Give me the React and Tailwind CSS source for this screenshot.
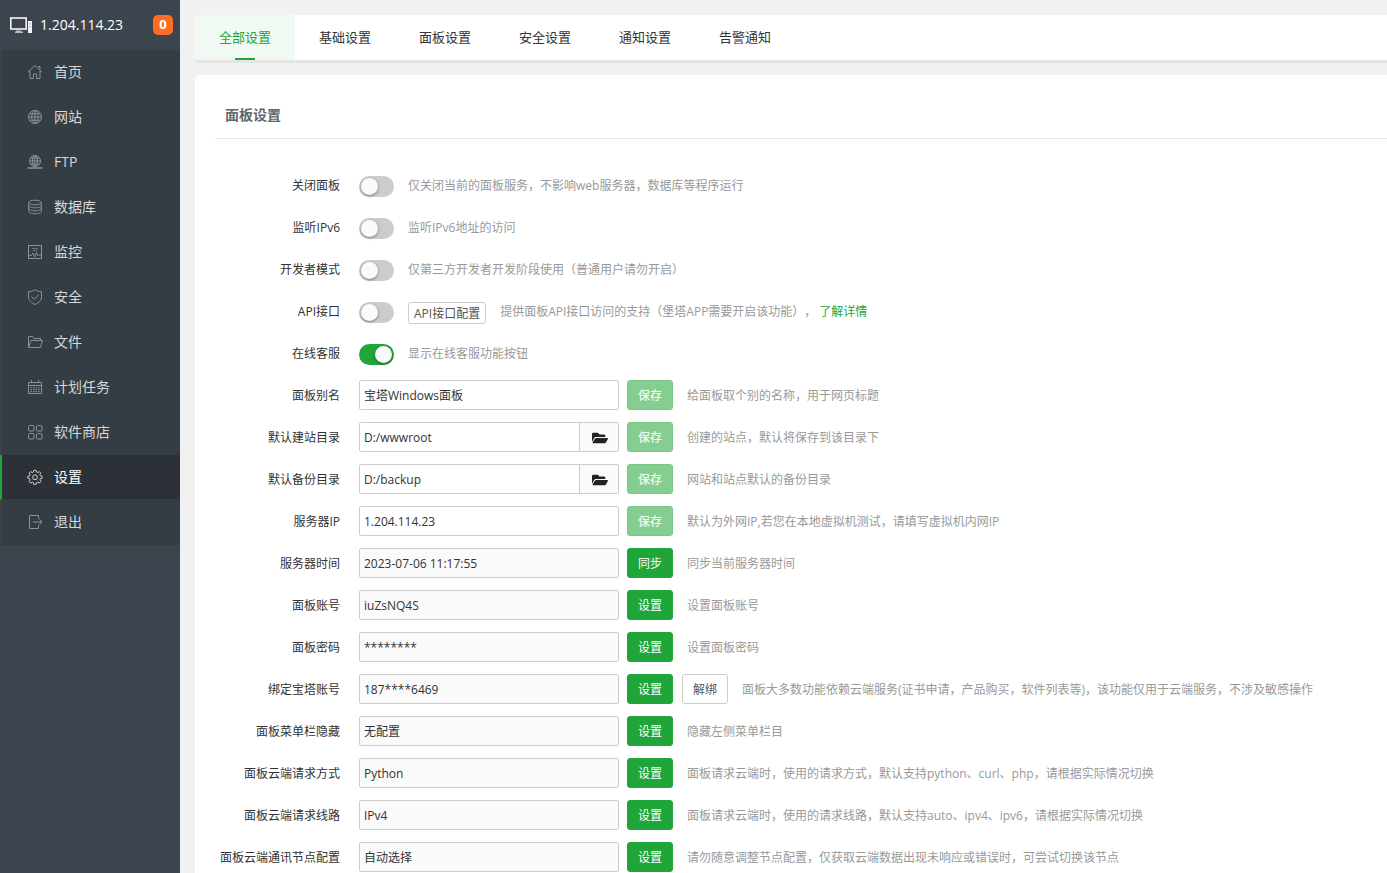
import React, { useState } from "react";
import { FaFolderOpen } from "react-icons/fa";

const icons = {
  home: (
    <>
      <path d="M1 8.2 8 1.5l7 6.7" />
      <path d="M3 7v7.5h3.4V10h3.2v4.5H13V7" />
      <path d="M11 2.5h2v3" />
    </>
  ),
  site: (
    <>
      <circle cx="8" cy="8" r="6.5" />
      <ellipse cx="8" cy="8" rx="3.2" ry="6.5" />
      <path d="M8 1.5v13M1.5 8h13M2.6 4.8h10.8M2.6 11.2h10.8" />
    </>
  ),
  ftp: (
    <>
      <circle cx="8" cy="7" r="5.5" />
      <ellipse cx="8" cy="7" rx="2.6" ry="5.5" />
      <path d="M8 1.5v11M2.5 7h11M3.5 4h9M3.5 10h9" />
      <path d="M0.5 14h15M6 14h4" strokeWidth="1.4" />
    </>
  ),
  database: (
    <>
      <ellipse cx="8" cy="3.5" rx="6.3" ry="2.3" />
      <path d="M1.7 3.5v9c0 1.3 2.8 2.3 6.3 2.3s6.3-1 6.3-2.3v-9" />
      <path d="M1.7 6.5c0 1.3 2.8 2.3 6.3 2.3s6.3-1 6.3-2.3M1.7 9.5c0 1.3 2.8 2.3 6.3 2.3s6.3-1 6.3-2.3" />
    </>
  ),
  control: (
    <>
      <rect x="1.5" y="1.5" width="13" height="13" />
      <path d="M5 4.5h6M6 6.5h4" opacity="0.7" />
      <path d="M1.5 11.5h2.7L6 9l1.7 4L9.5 8.5l1.3 3h1.4l.8-1 1.5 1" />
    </>
  ),
  safe: (
    <>
      <path d="M8 .8c2 1.3 4.2 1.8 6.5 1.9v5.1c0 3.5-2.7 6-6.5 7.7C4.2 13.8 1.5 11.3 1.5 7.8V2.7C3.8 2.6 6 2.1 8 .8Z" />
      <path d="m4.5 7.6 2.7 2.7 4.5-4.8" />
    </>
  ),
  folder: (
    <>
      <path d="M1.5 13.5v-11h4.2L7 4.5h6.5v2" />
      <path d="M1.5 13.5 4 6.500h11.500l-2.200 7Z" />
    </>
  ),
  cron: (
    <>
      <path d="M1.5 3.5h13v11h-13zM1.5 6.5h13M4.5 1v3M11.5 1v3" />
      <path d="M3.5 8.8h9M3.5 10.7h9M3.5 12.6h9" strokeDasharray="1.5 1" />
    </>
  ),
  soft: (
    <>
      <rect x="1.5" y="1.5" width="5.5" height="5.5" rx="1" />
      <rect x="9.5" y="1.5" width="5.5" height="5.5" rx="1" />
      <rect x="1.5" y="9.5" width="5.5" height="5.5" rx="1" />
      <rect x="9.5" y="9.5" width="5.5" height="5.5" rx="1" />
    </>
  ),
  config: (
    <>
      <path d="M6.8 1.300h2.400l.4 1.800 1.100.5 1.600-1 1.600 1.600-1 1.600.5 1.100 1.700.4v2l-1.700.4-.5 1.200 1 1.500-1.600 1.700-1.600-1-1.100.5-.4 1.700H6.800l-.4-1.700-1.100-.5-1.600 1-1.600-1.700 1-1.500-.5-1.200L.9 9.300v-2l1.700-.4.5-1.100-1-1.600 1.600-1.600 1.600 1 1.100-.5Z" />
      <circle cx="8" cy="8.3" r="2.4" />
    </>
  ),
  exit: (
    <>
      <path d="M11.5 4.5v-3h-9v13h9v-3" />
      <path d="M6 8h9M12.3 5.3 15 8l-2.7 2.7" />
    </>
  ),
};

const menus = [
  { icon: "home", title: "首页" },
  { icon: "site", title: "网站" },
  { icon: "ftp", title: "FTP" },
  { icon: "database", title: "数据库" },
  { icon: "control", title: "监控" },
  { icon: "safe", title: "安全" },
  { icon: "folder", title: "文件" },
  { icon: "cron", title: "计划任务" },
  { icon: "soft", title: "软件商店" },
  { icon: "config", title: "设置" },
  { icon: "exit", title: "退出" },
];

const tabs = ["全部设置", "基础设置", "面板设置", "安全设置", "通知设置", "告警通知"];

const switches = [
  { id: "close_panel", label: "关闭面板", tips: "仅关闭当前的面板服务，不影响web服务器，数据库等程序运行" },
  { id: "ipv6", label: "监听IPv6", tips: "监听IPv6地址的访问" },
  { id: "debug", label: "开发者模式", tips: "仅第三方开发者开发阶段使用（普通用户请勿开启）" },
  {
    id: "api",
    label: "API接口",
    config: "API接口配置",
    tips: "提供面板API接口访问的支持（堡塔APP需要开启该功能），",
    link: "了解详情",
  },
  { id: "service", label: "在线客服", on: true, tips: "显示在线客服功能按钮" },
];

const fields = [
  { id: "alias", label: "面板别名", value: "宝塔Windows面板", btn: "保存", tips: "给面板取个别的名称，用于网页标题" },
  { id: "sites_path", label: "默认建站目录", value: "D:/wwwroot", folder: true, btn: "保存", tips: "创建的站点，默认将保存到该目录下" },
  { id: "backup_path", label: "默认备份目录", value: "D:/backup", folder: true, btn: "保存", tips: "网站和站点默认的备份目录" },
  { id: "server_ip", label: "服务器IP", value: "1.204.114.23", btn: "保存", tips: "默认为外网IP,若您在本地虚拟机测试，请填写虚拟机内网IP" },
  { id: "server_time", label: "服务器时间", value: "2023-07-06 11:17:55", btn: "同步", tips: "同步当前服务器时间" },
  { id: "username", label: "面板账号", value: "iuZsNQ4S", btn: "设置", tips: "设置面板账号" },
  { id: "password", label: "面板密码", value: "********", btn: "设置", tips: "设置面板密码" },
  {
    id: "bt_account",
    label: "绑定宝塔账号",
    value: "187****6469",
    btn: "设置",
    extra: "解绑",
    tips: "面板大多数功能依赖云端服务(证书申请，产品购买，软件列表等)，该功能仅用于云端服务，不涉及敏感操作",
  },
  { id: "menu_hide", label: "面板菜单栏隐藏", value: "无配置", btn: "设置", tips: "隐藏左侧菜单栏目" },
  { id: "request_type", label: "面板云端请求方式", value: "Python", btn: "设置", tips: "面板请求云端时，使用的请求方式，默认支持python、curl、php，请根据实际情况切换" },
  { id: "request_line", label: "面板云端请求线路", value: "IPv4", btn: "设置", tips: "面板请求云端时，使用的请求线路，默认支持auto、ipv4、ipv6，请根据实际情况切换" },
  { id: "node", label: "面板云端通讯节点配置", value: "自动选择", btn: "设置", tips: "请勿随意调整节点配置，仅获取云端数据出现未响应或错误时，可尝试切换该节点" },
];

const Sidebar = () => {
  return (
    <aside className="w-[180px] shrink-0 bg-[#3c444d]">
      <div className="flex h-[50px] items-center pr-[7px] pl-[10px] text-white">
        <svg viewBox="0 0 22 16" className="h-4 w-[22px]" fill="none">
          <rect x="0.8" y="1" width="15.400" height="11" stroke="#f4f4f4" strokeWidth="1.600" />
          <path d="M6 13.500h5v1h2V16H5v-1.500h1z" fill="#bbb" />
          <path d="M18 4h4v12h-4z" fill="#f4f4f4" />
          <path d="M19.500 6h1v1.500h-1zM19.500 9h1v1.500h-1z" fill="#8a8f95" />
        </svg>
        <span className="ml-2 text-sm">1.204.114.23</span>
        <span className="ml-auto flex h-5 w-5 items-center justify-center rounded-[5px] bg-[#ff6c24] text-[13px] font-bold">
          0
        </span>
      </div>
      <nav>
        {menus.map((item) => {
          const active = item.title === "设置";
          return (
            <a
              key={item.icon}
              href={`#${item.icon}`}
              className={`flex h-[45px] items-center border-b border-l-2 border-b-[#343b42] pl-[25px] text-sm ${
                active
                  ? "border-l-[#20a53a] bg-[#2c3138] text-white"
                  : "border-l-[#444040] bg-[#353d44] text-[#d8d8d8]"
              }`}
            >
              <svg
                viewBox="0 0 16 16"
                className={`h-4 w-4 ${active ? "text-[#d0d0d0]" : "text-[#8d9194]"}`}
                fill="none"
                stroke="currentColor"
                strokeWidth="1"
              >
                {icons[item.icon]}
              </svg>
              <span className="ml-[11px]">{item.title}</span>
            </a>
          );
        })}
      </nav>
    </aside>
  );
};

const Tabs = () => {
  const [current, setCurrent] = useState(0);
  return (
    <div className="flex h-[45px] rounded-l bg-white shadow-[0_3px_0_#e5e5e5]">
      {tabs.map((tab, index) => (
        <button
          key={tab}
          type="button"
          onClick={() => setCurrent(index)}
          className={`relative w-[100px] cursor-pointer text-[13px] ${
            current === index ? "rounded-l bg-[#f0f9f2] text-[#20a53a]" : "text-[#333]"
          }`}
        >
          {tab}
          {current === index && (
            <span className="absolute bottom-0 left-10 h-[2px] w-5 bg-[#20a53a]"></span>
          )}
        </button>
      ))}
    </div>
  );
};

const Row = ({ id, label, children }) => (
  <div className="flex h-[30px] items-center">
    <label htmlFor={id} className="mr-[19px] w-[125px] shrink-0 pt-[2px] text-right text-[#333]">
      {label}
    </label>
    {children}
  </div>
);

const Tips = ({ children }) => (
  <span className="ml-[14px] pt-[2px] text-[#999] [text-spacing-trim:space-all]">{children}</span>
);

const Switch = ({ id, on }) => {
  const [checked, setChecked] = useState(!!on);
  return (
    <input
      id={id}
      type="checkbox"
      role="switch"
      checked={checked}
      onChange={(e) => setChecked(e.target.checked)}
      className="mt-[3px] h-[21px] w-[35px] shrink-0 cursor-pointer appearance-none rounded-full bg-[#ccc] p-[2px] before:block before:h-[17px] before:w-[17px] before:rounded-full before:bg-[#fafafa] before:shadow-[0_1px_3px_rgba(0,0,0,0.4)] checked:bg-[#20a53a] checked:before:ml-[14px]"
    />
  );
};

const Field = ({ item }) => {
  const [value, setValue] = useState(item.value);
  const save = item.btn === "保存";
  return (
    <>
      <div className="flex h-[30px] w-[260px] shrink-0">
        <input
          id={item.id}
          type="text"
          value={value}
          readOnly={!save}
          onChange={(e) => setValue(e.target.value)}
          className={`w-full min-w-0 border border-[#ccc] px-1 pt-[2px] text-[#333] outline-none ${
            item.folder ? "rounded-l-xs" : "rounded-xs"
          } ${save ? "bg-white" : "bg-[#fafafa]"}`}
        />
        {item.folder && (
          <button
            type="button"
            aria-label="选择目录"
            className="flex w-[39px] shrink-0 cursor-pointer items-center justify-center rounded-r-xs border border-l-0 border-[#ccc] bg-[#fafafa] pt-[2px] pl-[2px] text-base text-[#222]"
          >
            <FaFolderOpen />
          </button>
        )}
      </div>
      <button
        type="button"
        disabled={save && value === item.value}
        className="ml-2 h-[30px] w-[46px] shrink-0 cursor-pointer rounded-[3px] border border-[#20a53a] bg-[#20a53a] pt-[2px] text-white disabled:border-[#79c886] disabled:bg-[#86cd91] disabled:font-medium disabled:text-[#f0f9f2]"
      >
        {item.btn}
      </button>
      {item.extra && (
        <button
          type="button"
          className="ml-[9px] h-[30px] w-[46px] shrink-0 cursor-pointer rounded-[3px] border border-[#ccc] bg-white pt-[2px] text-[#555]"
        >
          {item.extra}
        </button>
      )}
    </>
  );
};

const App = () => {
  return (
    <div className="flex min-h-screen bg-[#f1f1f1] font-['Open_Sans','Noto_Sans_CJK_SC',sans-serif] text-xs">
      <Sidebar />
      <main className="flex min-w-0 flex-1 flex-col overflow-x-hidden pt-[15px] pl-[15px]">
        <Tabs />
        <section className="mt-[15px] flex-1 rounded-tl bg-white pl-5">
          <h2 className="flex h-16 items-center border-b border-[#e6e6e6] pt-4 pl-[10px] text-sm font-semibold text-[#666]">
            面板设置
          </h2>
          <form className="flex flex-col gap-3 pt-[31px] whitespace-nowrap" onSubmit={(e) => e.preventDefault()}>
            {switches.map((item) => (
              <Row key={item.id} id={item.id} label={item.label}>
                <Switch id={item.id} on={item.on} />
                {item.config && (
                  <button
                    type="button"
                    className="mt-1 ml-[14px] h-[22px] shrink-0 cursor-pointer rounded-[3px] border border-[#ccc] px-[5px] pt-[2px] leading-[18px] text-[#555]"
                  >
                    {item.config}
                  </button>
                )}
                <Tips>
                  {item.tips}
                  {item.link && (
                    <a href="#api-help" className="ml-[3px] text-[#20a53a]">
                      {item.link}
                    </a>
                  )}
                </Tips>
              </Row>
            ))}
            {fields.map((item) => (
              <Row key={item.id} id={item.id} label={item.label}>
                <Field item={item} />
                <Tips>{item.tips}</Tips>
              </Row>
            ))}
          </form>
        </section>
      </main>
    </div>
  );
};

export default App;
